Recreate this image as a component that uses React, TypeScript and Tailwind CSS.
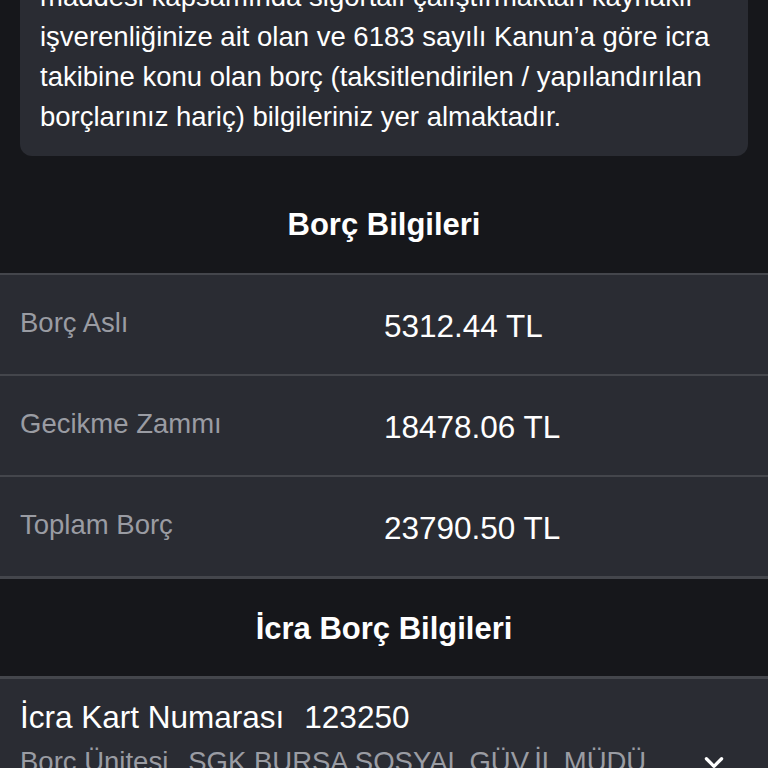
const rows = [
  { label: "Borç Aslı", value: "5312.44 TL" },
  { label: "Gecikme Zammı", value: "18478.06 TL" },
  { label: "Toplam Borç", value: "23790.50 TL" },
];

export default function App() {
  return (
    <div
      className="h-[768px] w-[768px] overflow-hidden bg-[#16171b] text-white"
      style={{ fontFamily: '"Liberation Sans", Arial, sans-serif' }}
    >
      {/* info card, scrolled partly off the top */}
      <div className="px-5">
        <div className="-mt-[43px] whitespace-nowrap rounded-xl bg-[#2a2c33] px-5 pb-[19px] pt-5 text-[27.5px] leading-[40px] text-white">
          maddesi kapsamında sigortalı çalıştırmaktan kaynaklı
          <br />
          işverenliğinize ait olan ve 6183 sayılı Kanun’a göre icra
          <br />
          takibine konu olan borç (taksitlendirilen / yapılandırılan
          <br />
          borçlarınız hariç) bilgileriniz yer almaktadır.
        </div>
      </div>

      <div className="flex h-[117px] items-center justify-center pt-[22px] text-[31px] font-bold">
        Borç Bilgileri
      </div>

      <div className="border-b-[3px] border-[#44464c] bg-[#2a2c33]">
        {rows.map((row) => (
          <div key={row.label} className="flex h-[101px] items-center border-t-2 border-[#44464c]">
            <div className="w-[384px] pb-1 pl-5 text-[27.5px] text-[#9a9ca3]">{row.label}</div>
            <div className="pt-1 text-[31.5px] text-white">{row.value}</div>
          </div>
        ))}
      </div>

      <div className="flex h-[100px] items-center justify-center border-b-[3px] border-[#44464c] pt-1 text-[31px] font-bold">
        İcra Borç Bilgileri
      </div>

      <div className="bg-[#2a2c33] px-5 pt-[18px]">
        <div className="text-[31.5px] leading-[40px] text-white">
          İcra Kart Numarası<span className="ml-5">123250</span>
        </div>
        <div className="flex items-start justify-between pt-1">
          <div className="whitespace-nowrap text-[27.5px] text-[#9a9ca3]">
            Borç Ünitesi<span className="ml-5">SGK BURSA SOSYAL GÜV.İL MÜDÜ</span>
          </div>
          <svg width="26" height="26" viewBox="0 0 24 24" className="mr-[21px] mt-[8px]" fill="none" stroke="white" strokeWidth="3" strokeLinecap="round" strokeLinejoin="round">
            <path d="M5 9l7 7 7-7" />
          </svg>
        </div>
      </div>
    </div>
  );
}
